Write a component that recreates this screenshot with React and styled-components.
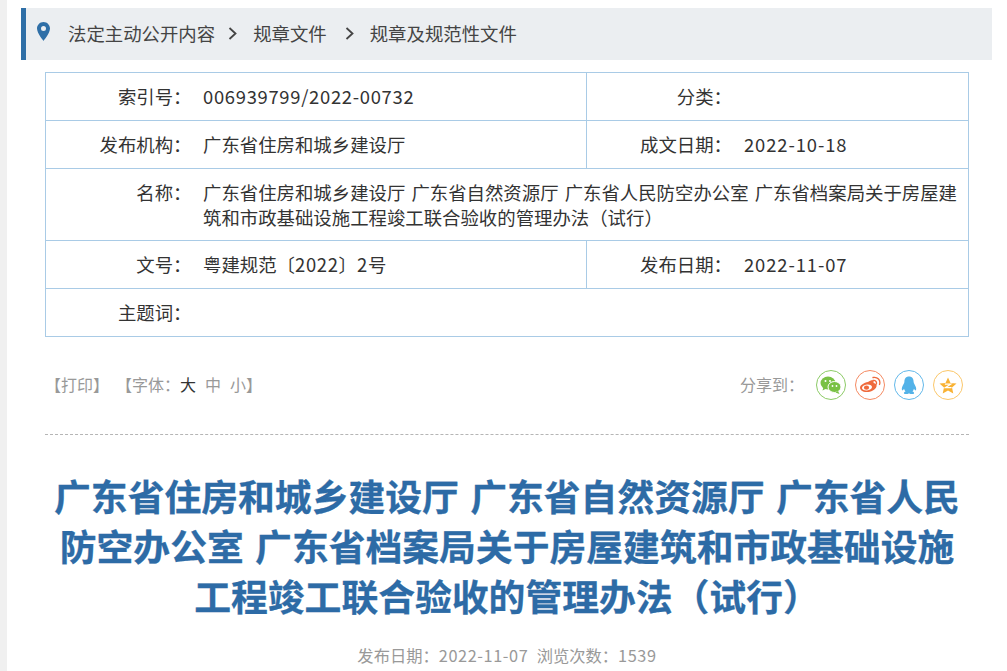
import React from "react";
import styled, { createGlobalStyle } from "styled-components";

const GlobalStyle = createGlobalStyle`
  html, body {
    margin: 0;
    padding: 0;
    background: #fff;
    overflow: hidden;
  }
  body {
    font-family: "Noto Sans CJK SC", "Liberation Sans", sans-serif;
    text-spacing-trim: space-all;
  }
`;

const Page = styled.div`
  display: flex;
  height: 671px;
  overflow: hidden;
`;

const SideStrip = styled.div`
  width: 7px;
  flex: none;
  background: #f0f0f0;
`;

const Main = styled.div`
  width: 971px;
  flex: none;
  margin-left: 14px;
  padding-top: 8px;
`;

const Crumbs = styled.div`
  display: flex;
  align-items: center;
  height: 52px;
  box-sizing: border-box;
  border-left: 5px solid #2f6fa7;
  background: #ebeef1;
  padding: 0 0 2px 11px;
  font-size: 18.4px;
  color: #444;
`;

const Pin = styled.svg`
  width: 13px;
  height: 19px;
  margin-right: 18px;
  margin-top: -4px;
`;

const Chevron = styled.svg`
  width: 9px;
  height: 13px;
  margin: ${({ $wide }) => ($wide ? "0 16px 0 18px" : "0 16px 0 13px")};
`;

const InfoTable = styled.div`
  margin: 12px 23px 0 24px;
  border: 1px solid #a9cbe6;
  border-bottom: none;
  font-size: 18.4px;
  color: #333;
`;

const Row = styled.div`
  display: flex;
  min-height: ${({ $tall }) => ($tall ? "71px" : "47px")};
  border-bottom: 1px solid #a9cbe6;
`;

const Cell = styled.div`
  display: flex;
  align-items: center;
  width: ${({ $w }) => $w || "auto"};
  flex: ${({ $w }) => ($w ? "none" : "1")};
  box-sizing: border-box;
  padding-bottom: 2px;
  border-left: ${({ $divider }) => ($divider ? "1px solid #a9cbe6" : "none")};
`;

const Label = styled.div`
  width: ${({ $w }) => $w};
  flex: none;
  text-align: right;
  padding-top: ${({ $top }) => ($top ? "11px" : "0")};
  line-height: ${({ $top }) => ($top ? "25px" : "normal")};
`;

const Value = styled.div`
  margin-left: ${({ $gap }) => $gap};
  padding: ${({ $top }) => ($top ? "11px 8px 0 0" : "0")};
  line-height: ${({ $top }) => ($top ? "25px" : "normal")};
  word-spacing: 2px;
`;

const Num = styled.span`
  letter-spacing: ${({ $space }) => $space || "0.7px"};
`;

const Tools = styled.div`
  display: flex;
  align-items: center;
  justify-content: space-between;
  margin: 33px 29px 0 24px;
  height: 30px;
  font-size: 16px;
  color: #999;
`;

const Links = styled.div`
  display: flex;
  align-items: center;
  padding-bottom: 2px;
`;

const ToolLink = styled.span`
  margin-right: 7px;
`;

const FontChoice = styled.span`
  margin-right: ${({ $last }) => ($last ? "0" : "9px")};
  color: ${({ $active }) => ($active ? "#333" : "#999")};
`;

const Share = styled.div`
  display: flex;
  align-items: center;
  gap: 9px;
`;

const ShareLabel = styled.span`
  margin-right: 3px;
  padding-bottom: 2px;
`;

const ShareButton = styled.div`
  display: flex;
  align-items: center;
  justify-content: center;
  width: 30px;
  height: 30px;
  box-sizing: border-box;
  border-radius: 50%;
  border: 1px solid ${({ $color }) => $color};
`;

const Rule = styled.div`
  margin: 34px 23px 0 24px;
  border-top: 1px dashed #b5b5b5;
`;

const Title = styled.h1`
  margin: 35px 23px 0 24px;
  text-align: center;
  font-size: 36.8px;
  line-height: 50px;
  font-weight: 700;
  color: #2d6ba6;
  word-spacing: 3px;
  -webkit-text-stroke: 0.3px #2d6ba6;
`;

const Meta = styled.div`
  margin: 23px 23px 0 24px;
  text-align: center;
  font-size: 16.3px;
  color: #999;
  word-spacing: 0.5px;
`;

const App = () => (
  <Page>
    <GlobalStyle />
    <SideStrip />
    <Main>
      <Crumbs>
        <Pin viewBox="0 0 13 19">
          <path
            fillRule="evenodd"
            fill="#2f6fa7"
            d="M6.5 0C2.9 0 0 2.9 0 6.600 0 11.200 6.500 19 6.500 19S13 11.200 13 6.600C13 2.900 10.100 0 6.500 0zm0 9a2.500 2.500 0 1 1 0-5 2.500 2.500 0 0 1 0 5z"
          />
        </Pin>
        法定主动公开内容
        <Chevron viewBox="0 0 9 13">
          <path d="M1.500 1l6 5.500-6 5.500" fill="none" stroke="#444" strokeWidth="1.800" />
        </Chevron>
        规章文件
        <Chevron $wide viewBox="0 0 9 13">
          <path d="M1.500 1l6 5.500-6 5.500" fill="none" stroke="#444" strokeWidth="1.800" />
        </Chevron>
        规章及规范性文件
      </Crumbs>

      <InfoTable>
        <Row>
          <Cell $w="540px">
            <Label $w="145.5px">索引号&#xFF1A;</Label>
            <Value $gap="11.5px"><Num>006939799/2022-00732</Num></Value>
          </Cell>
          <Cell $divider>
            <Label $w="145px">分类&#xFF1A;</Label>
          </Cell>
        </Row>
        <Row>
          <Cell $w="540px">
            <Label $w="145.5px">发布机构&#xFF1A;</Label>
            <Value $gap="11.5px">广东省住房和城乡建设厅</Value>
          </Cell>
          <Cell $divider>
            <Label $w="145px">成文日期&#xFF1A;</Label>
            <Value $gap="12px"><Num $space="0.9px">2022-10-18</Num></Value>
          </Cell>
        </Row>
        <Row $tall>
          <Label $top $w="145.5px">名称&#xFF1A;</Label>
          <Value $top $gap="11.5px">
            广东省住房和城乡建设厅 广东省自然资源厅 广东省人民防空办公室 广东省档案局关于房屋建筑和市政基础设施工程竣工联合验收的管理办法&#xFF08;试行&#xFF09;
          </Value>
        </Row>
        <Row>
          <Cell $w="540px">
            <Label $w="145.5px">文号&#xFF1A;</Label>
            <Value $gap="11.5px">粤建规范〔<Num>2022</Num>〕<Num>2</Num>号</Value>
          </Cell>
          <Cell $divider>
            <Label $w="145px">发布日期&#xFF1A;</Label>
            <Value $gap="12px"><Num $space="0.9px">2022-11-07</Num></Value>
          </Cell>
        </Row>
        <Row>
          <Cell $w="540px">
            <Label $w="145.5px">主题词&#xFF1A;</Label>
          </Cell>
        </Row>
      </InfoTable>

      <Tools>
        <Links>
          <ToolLink>【打印】</ToolLink>
          【字体&#xFF1A;
          <FontChoice $active>大</FontChoice>
          <FontChoice>中</FontChoice>
          <FontChoice $last>小</FontChoice>
          】
        </Links>
        <Share>
          <ShareLabel>分享到&#xFF1A;</ShareLabel>
          <ShareButton $color="#8ccb66">
            <svg width="22" height="20" viewBox="0 0 22 20">
              <ellipse cx="8" cy="8" rx="7.500" ry="6.500" fill="#79c144" />
              <path d="M3.500 12l-1 3.500 4-2z" fill="#79c144" />
              <ellipse cx="14.500" cy="12" rx="6.500" ry="5.500" fill="#79c144" stroke="#fff" strokeWidth="1" />
              <path d="M18 16l1.500 3-4-1.500z" fill="#79c144" />
              <circle cx="5.500" cy="6" r="1" fill="#fff" />
              <circle cx="10" cy="6" r="1" fill="#fff" />
              <circle cx="12.500" cy="11" r="0.900" fill="#fff" />
              <circle cx="16.500" cy="11" r="0.900" fill="#fff" />
            </svg>
          </ShareButton>
          <ShareButton $color="#f58a62">
            <svg width="22" height="20" viewBox="0 0 22 20">
              <path
                fillRule="evenodd"
                fill="#ef6a3c"
                d="M9 7c3.500-2.500 6.500-2.500 5.500 1 2.500.3 3.500 1.800 3 3.500C16.500 15 12 17 7.500 17 3.500 17 1 15 1 12.500 1 10.500 5 7.500 9 7zM8 9.500c-3 .3-5 1.800-5 3.500s2.200 2.700 5 2.500 5-1.900 5-3.500-2.200-2.800-5-2.500z"
              />
              <ellipse cx="7.500" cy="12.700" rx="2.600" ry="2.100" fill="#ef6a3c" />
              <path d="M14 5.500c2.300-.5 4 1.300 3.400 3.500M14 2.500c4.500-1 8 2.800 6.500 7" fill="none" stroke="#ef6a3c" strokeWidth="1.300" strokeLinecap="round" />
            </svg>
          </ShareButton>
          <ShareButton $color="#62b8ea">
            <svg width="16" height="19" viewBox="0 0 18 21">
              <path
                fill="#53b2e8"
                d="M9 0.500C5.500 0.500 3.800 3 3.800 6.500 3.800 8 2 10 1.200 12.500.6 14.500 1 16 1.700 16c.6 0 1.300-1 1.700-1.800.3 1.200.9 2.200 1.700 3-1.300.5-2 1.100-1.800 1.900.3 1 2.500 1.200 3.900.9 .8-.2 1.300-.5 1.800-.8.500.3 1 .6 1.800.8 1.400.3 3.600.1 3.900-.9.200-.8-.5-1.400-1.800-1.900.8-.8 1.400-1.800 1.700-3 .4.800 1.100 1.800 1.700 1.800.7 0 1.100-1.500.5-3.500C16 10 14.200 8 14.200 6.500 14.200 3 12.500.5 9 .500z"
              />
            </svg>
          </ShareButton>
          <ShareButton $color="#fbc76a">
            <svg width="18" height="17" viewBox="0 0 20 19">
              <path
                fill="#f9b233"
                d="M10 0.500l2.800 6.100 6.700.7-5 4.500 1.400 6.600L10 15l-5.900 3.400 1.400-6.600-5-4.500 6.700-.7z"
              />
              <path d="M6.500 8h6.500l-6 4h7" fill="none" stroke="#fff" strokeWidth="1.400" />
            </svg>
          </ShareButton>
        </Share>
      </Tools>

      <Rule />

      <Title>
        广东省住房和城乡建设厅 广东省自然资源厅 广东省人民防空办公室 广东省档案局关于房屋建筑和市政基础设施工程竣工联合验收的管理办法&#xFF08;试行&#xFF09;
      </Title>

      <Meta>
        发布日期&#xFF1A;<Num $space="0.6px">2022-11-07</Num>&nbsp;&nbsp;浏览次数&#xFF1A;<Num $space="0.6px">1539</Num>
      </Meta>
    </Main>
  </Page>
);

export default App;
